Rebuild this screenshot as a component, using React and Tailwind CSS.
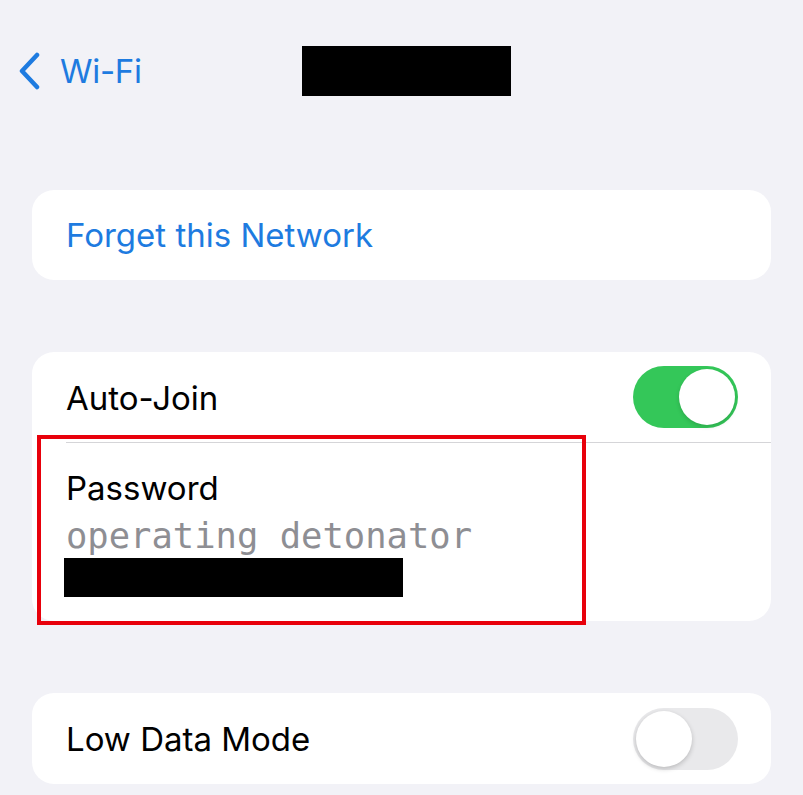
export default function App() {
  const sans = { fontFamily: 'Inter, "Noto Sans", sans-serif' };
  return (
    <div className="w-[803px] h-[795px] bg-[#f2f2f7] overflow-hidden relative" style={sans}>
      <div className="flex items-center h-[50px] mt-[46px] pl-[17px]">
        <svg width="24" height="38" viewBox="0 0 24 38" className="shrink-0">
          <path d="M20 3 L5 19 L20 35" fill="none" stroke="#1e7be0" strokeWidth="4.5" strokeLinecap="round" strokeLinejoin="round" />
        </svg>
        <span className="ml-[19px] text-[33px] text-[#1e7be0] leading-none tracking-[-0.3px]">Wi-Fi</span>
        <div className="ml-[160px] w-[209px] h-[50px] bg-black" />
      </div>

      <div className="mx-[32px] mt-[94px] h-[90px] bg-white rounded-[22px] flex items-center pl-[34px]">
        <span className="text-[33px] text-[#1e7be0] mt-[2px]">Forget this Network</span>
      </div>

      <div className="mx-[32px] mt-[72px] bg-white rounded-[22px] relative">
        <div className="h-[90px] flex items-center justify-between pl-[34px] pr-[33px]">
          <span className="text-[33px] text-black mt-[3px]">Auto-Join</span>
          <div className="w-[105px] h-[62px] rounded-full bg-[#34c759] flex items-center justify-end pr-[3px]">
            <div className="w-[56px] h-[56px] rounded-full bg-white shadow-[0_2px_4px_rgba(0,0,0,0.15)]" />
          </div>
        </div>
        <div className="ml-[34px] h-px bg-[#d5d5d8]" />
        <div className="pl-[34px] pt-[26px] pb-[24px]">
          <div className="text-[33px] text-black leading-[38px]">Password</div>
          <div className="text-[35.5px] text-[#8e8e93] leading-[44px] mt-[7px]" style={{ fontFamily: '"DejaVu Sans Mono", "Liberation Mono", monospace' }}>operating detonator</div>
          <div className="w-[339px] h-[39px] bg-black -ml-[2px]" />
        </div>
        <div className="absolute left-[5px] top-[83px] w-[549px] h-[190px] border-[4px] border-[#e8000b]" />
      </div>

      <div className="mx-[32px] mt-[72px] h-[91px] bg-white rounded-[22px] flex items-center justify-between pl-[34px] pr-[33px]">
        <span className="text-[33px] text-black mt-[3px]">Low Data Mode</span>
        <div className="w-[105px] h-[62px] rounded-full bg-[#e9e9eb] flex items-center pl-[3px]">
          <div className="w-[56px] h-[56px] rounded-full bg-white shadow-[0_2px_5px_rgba(0,0,0,0.2)]" />
        </div>
      </div>
    </div>
  );
}
